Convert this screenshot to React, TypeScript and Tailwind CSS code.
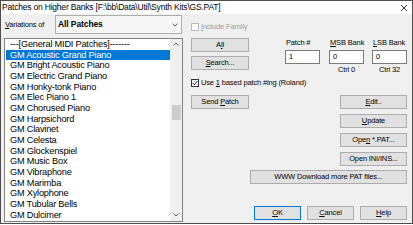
import React from 'react'

const patches = [
  '---[General MIDI Patches]-------',
  'GM Acoustic Grand Piano',
  'GM Bright Acoustic Piano',
  'GM Electric Grand Piano',
  'GM Honky-tonk Piano',
  'GM Elec Piano 1',
  'GM Chorused Piano',
  'GM Harpsichord',
  'GM Clavinet',
  'GM Celesta',
  'GM Glockenspiel',
  'GM Music Box',
  'GM Vibraphone',
  'GM Marimba',
  'GM Xylophone',
  'GM Tubular Bells',
  'GM Dulcimer',
]

const U = ({ children }: { children: React.ReactNode }) => (
  <span className="underline underline-offset-[1px]">{children}</span>
)

function Btn({ children, className = '' }: { children: React.ReactNode; className?: string }) {
  return (
    <div className={`h-[14px] bg-[#e1e1e1] border border-[#adadad] flex items-center justify-center leading-none whitespace-nowrap ${className}`}>
      <span>{children}</span>
    </div>
  )
}

function Chevron({ up }: { up?: boolean }) {
  return (
    <svg width="6" height="4" viewBox="0 0 6 4">
      <polyline
        points={up ? '0.5,3.5 3,1 5.5,3.5' : '0.5,0.5 3,3 5.5,0.5'}
        fill="none"
        stroke="#606060"
        strokeWidth="1"
      />
    </svg>
  )
}

function Field({ label, value, sub, className = '' }: { label: React.ReactNode; value: string; sub?: string; className?: string }) {
  return (
    <div className={`w-[35px] flex flex-col ${className}`}>
      <div className="h-[10px] flex items-center pl-[1px] leading-none whitespace-nowrap"><span>{label}</span></div>
      <div className="h-[14px] mt-[2px] bg-white border border-[#7a7a7a] flex items-center pl-[3px] leading-none">{value}</div>
      <div className="h-[9px] mt-[1px] flex items-center justify-center leading-none whitespace-nowrap">{sub}</div>
    </div>
  )
}

export default function App() {
  return (
    <div className="w-[413px] h-[224px] border border-[#4d4d4d] bg-[#f0f0f0] text-black font-['Liberation_Sans',Arial,sans-serif] overflow-hidden flex flex-col">
      {/* title bar */}
      <div className="h-[13px] shrink-0 bg-white flex items-center justify-between pl-[1px] pr-[5px]">
        <span className="text-[8.5px] tracking-[-0.2px] leading-none whitespace-nowrap">
          {'Patches on Higher Banks [F:\\bb\\Data\\Util\\Synth Kits\\GS.PAT]'}
        </span>
        <svg width="6" height="6" viewBox="0 0 6 6">
          <path d="M0 0L6 6M6 0L0 6" stroke="#000" strokeWidth="0.8" />
        </svg>
      </div>

      <div className="flex pl-[3px]">
        {/* left column */}
        <div className="w-[179px] flex flex-col">
          <div className="h-[19px] mt-[1px] flex items-center">
            <span className="w-[51px] pl-[1px] text-[7.5px] tracking-[-0.15px] leading-none whitespace-nowrap">
              <U>V</U>ariations of
            </span>
            <div className="w-[127px] h-[19px] bg-[#f7f7f7] border border-[#adadad] flex items-center justify-between pl-[2px] pr-[3px]">
              <span className="font-bold text-[8.5px] tracking-[-0.1px] leading-none">All Patches</span>
              <Chevron />
            </div>
          </div>

          <div className="h-[184px] mt-[4px] bg-white border border-[#828282] flex">
            <div className="flex-1 pl-[1px] text-[9.2px] tracking-[-0.2px]">
              {patches.map((p, i) => (
                <div
                  key={p}
                  className={`h-[10.67px] leading-[10.67px] pl-[4px] whitespace-nowrap ${i === 1 ? 'bg-[#0078d7] text-white' : ''}`}
                >
                  {p}
                </div>
              ))}
            </div>
            <div className="w-[12px] bg-[#f0f0f0] flex flex-col items-center">
              <div className="h-[9px] flex items-center justify-center">
                <Chevron up />
              </div>
              <div className="w-[9px] h-[15px] mt-[57px] bg-[#cdcdcd]" />
              <div className="mt-auto h-[12px] flex items-center justify-center">
                <Chevron />
              </div>
            </div>
          </div>
        </div>

        {/* right column */}
        <div className="ml-[8px] w-[216px] flex flex-col text-[7.5px] tracking-[-0.15px]">
          <div className="h-[8px] mt-[9px] flex items-center gap-[2px] text-[#a0a0a0] leading-none">
            <div className="w-[8px] h-[8px] bg-white border border-[#bcbcbc]" />
            <span><U>I</U>nclude Family</span>
          </div>

          <div className="mt-[7px] flex">
            <div className="w-[58px] flex flex-col gap-[4px]">
              <Btn>A<U>l</U>l</Btn>
              <Btn><U>S</U>earch...</Btn>
            </div>
            <Field className="ml-[36px]" label="Patch #" value="1" />
            <Field className="ml-[9px]" label={<><U>M</U>SB Bank</>} value="0" sub="Ctrl 0" />
            <Field className="ml-[8px]" label={<><U>L</U>SB Bank</>} value="0" sub="Ctrl 32" />
          </div>

          <div className="h-[8px] mt-[5px] flex items-center gap-[2px] leading-none">
            <div className="w-[8px] h-[8px] bg-white border border-[#333] flex items-center justify-center">
              <svg width="6" height="6" viewBox="0 0 6 6">
                <polyline points="0.6,3 2.3,4.8 5.4,1" fill="none" stroke="#000" strokeWidth="0.9" />
              </svg>
            </div>
            <span>Use <U>1</U> based patch #ing (Roland)</span>
          </div>

          <div className="mt-[8px] flex justify-between">
            <Btn className="w-[58px]">Send <U>P</U>atch</Btn>
            <Btn className="w-[67px]"><U>E</U>dit..</Btn>
          </div>
          <Btn className="w-[67px] self-end mt-[5px]"><U>U</U>pdate</Btn>
          <Btn className="w-[67px] self-end mt-[5px]">Ope<U>n</U> *.PAT...</Btn>
          <Btn className="w-[67px] self-end mt-[5px]">Open INI/INS...</Btn>
          <Btn className="w-[157px] self-end mt-[4px]">WWW Download more PAT files...</Btn>

          <div className="mt-[22px] flex justify-end gap-[6px]">
            <Btn className="w-[47px] !border-[#0078d7]"><U>O</U>K</Btn>
            <Btn className="w-[47px]"><U>C</U>ancel</Btn>
            <Btn className="w-[47px]"><U>H</U>elp</Btn>
          </div>
        </div>
      </div>
    </div>
  )
}
